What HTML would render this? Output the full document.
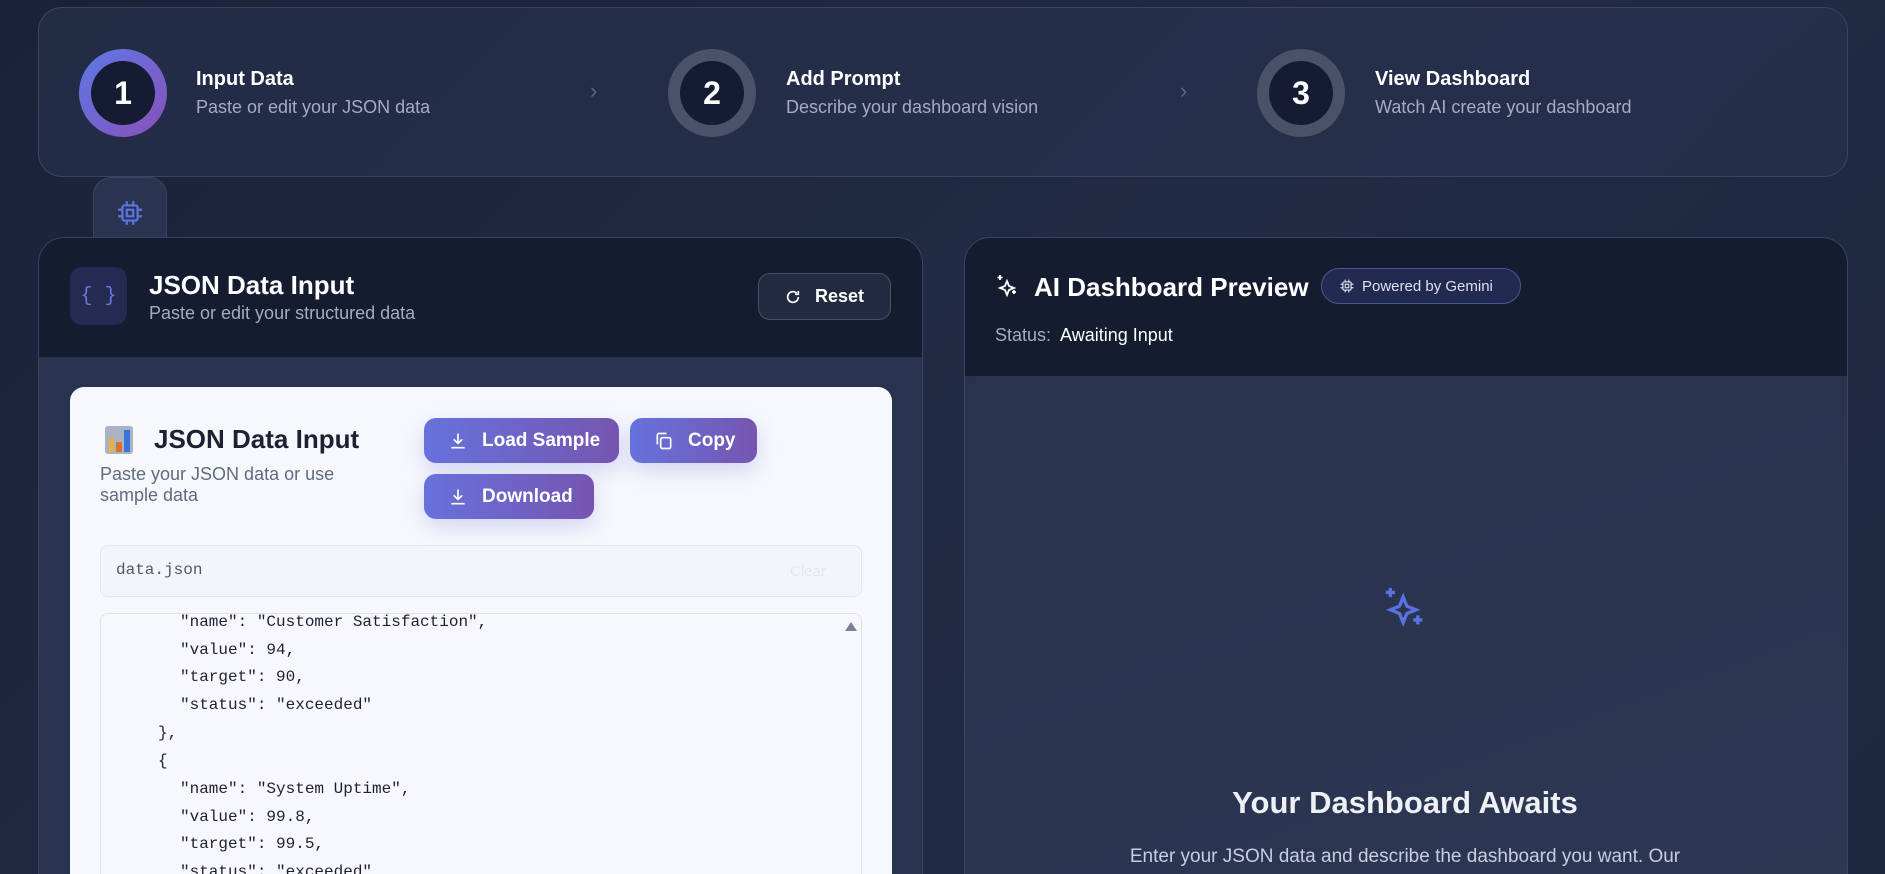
<!DOCTYPE html>
<html><head><meta charset="utf-8"><style>
*{box-sizing:border-box;margin:0;padding:0}
html,body{width:1885px;height:874px;overflow:hidden}
body{background:linear-gradient(135deg,#1a2238 0%,#222b45 50%,#1e2740 100%);font-family:"Liberation Sans",sans-serif;color:#fff}
#w{position:relative;width:1885px;height:874px;overflow:hidden}
.abs{position:absolute}
.stepper{left:38px;top:7px;width:1810px;height:170px;border:1px solid #3a4460;border-radius:24px;background:rgba(40,50,78,.6)}
.circ{width:88px;height:88px;border-radius:50%;display:flex;align-items:center;justify-content:center;font-size:32px;font-weight:bold}
.circ .in{width:64px;height:64px;border-radius:50%;background:#151b31;display:flex;align-items:center;justify-content:center}
.st{font-size:20px;font-weight:bold;color:#fff}
.ss{font-size:18px;color:#a4acc0;margin-top:6px}
.chev{color:#5d6680;font-size:22px}
.panel{border:1px solid #3a4460;border-radius:26px;overflow:hidden;background:#283350}
.hdr{background:#151c30}
.btn{background:linear-gradient(90deg,#6672dc,#7655b0);border-radius:12px;color:#fff;font-weight:bold;font-size:19px;display:flex;align-items:center;gap:14px;padding-left:24px;box-shadow:0 8px 20px rgba(102,114,220,.25)}
pre{font-family:"Liberation Mono",monospace;font-size:16px;line-height:27.7px;color:#1e2230}
</style></head><body><div id="w">
<div class="abs stepper"></div>
<div class="abs circ" style="left:79px;top:49px;background:linear-gradient(135deg,#5c78e6,#8a50b8)"><div class="in">1</div></div>
<div class="abs" style="left:196px;top:68px"><div class="st">Input Data</div><div class="ss">Paste or edit your JSON data</div></div>
<div class="abs chev" style="left:590px;top:78px">›</div>
<div class="abs circ" style="left:668px;top:49px;background:#4a5268"><div class="in">2</div></div>
<div class="abs" style="left:786px;top:68px"><div class="st">Add Prompt</div><div class="ss">Describe your dashboard vision</div></div>
<div class="abs chev" style="left:1180px;top:78px">›</div>
<div class="abs circ" style="left:1257px;top:49px;background:#4a5268"><div class="in">3</div></div>
<div class="abs" style="left:1375px;top:68px"><div class="st">View Dashboard</div><div class="ss">Watch AI create your dashboard</div></div>

<div class="abs" style="left:93px;top:177px;width:74px;height:62px;border:1px solid #3a4460;border-bottom:none;border-radius:18px 18px 0 0;background:#2a3350"></div>
<svg class="abs" style="left:117px;top:199px" width="26" height="28" viewBox="0 0 24 24" fill="none" stroke="#5d74e0" stroke-width="2"><rect x="5" y="5" width="14" height="14" rx="2"/><rect x="9" y="9" width="6" height="6"/><path d="M9 1v4M15 1v4M9 19v4M15 19v4M1 9h4M1 15h4M19 9h4M19 15h4"/></svg>

<div class="abs panel" style="left:38px;top:237px;width:885px;height:680px">
 <div class="hdr" style="height:119px"></div>
</div>
<div class="abs" style="left:70px;top:267px;width:57px;height:58px;border-radius:12px;background:#252a52;color:#6a78e0;font-size:20px;display:flex;align-items:center;justify-content:center;font-family:'Liberation Mono',monospace">{ }</div>
<div class="abs" style="left:149px;top:270px;font-size:26px;font-weight:bold">JSON Data Input</div>
<div class="abs" style="left:149px;top:303px;font-size:18px;color:#a4acc0">Paste or edit your structured data</div>
<div class="abs" style="left:758px;top:273px;width:133px;height:47px;border:1px solid #465068;border-radius:12px;background:#232b40;display:flex;align-items:center;justify-content:center;gap:14px;font-weight:bold;font-size:18px">
<svg width="16" height="16" viewBox="0 0 24 24" fill="none" stroke="#fff" stroke-width="2.5"><path d="M20 12a8 8 0 1 1-2.5-5.8M20 3v5h-5"/></svg>Reset</div>

<div class="abs" style="left:70px;top:387px;width:822px;height:520px;background:#f7f8fc;border-radius:14px"></div>
<div class="abs" style="left:105px;top:424px;width:28px;height:30px">
<div class="abs" style="left:0;top:2px;width:28px;height:28px;background:#a9b3c4;border-radius:3px"></div>
<div class="abs" style="left:4px;top:14px;width:5px;height:14px;background:#e3b445"></div>
<div class="abs" style="left:11px;top:18px;width:6px;height:10px;background:#d9702f"></div>
<div class="abs" style="left:19px;top:6px;width:6px;height:22px;background:#3c73d6"></div></div>
<div class="abs" style="left:154px;top:424px;font-size:26px;font-weight:bold;color:#1c2233">JSON Data Input</div>
<div class="abs" style="left:100px;top:464px;font-size:18px;color:#606a80;line-height:21px;width:270px">Paste your JSON data or use sample data</div>
<div class="abs btn" style="left:424px;top:418px;width:195px;height:45px"><svg width="20" height="20" viewBox="0 0 24 24" fill="none" stroke="#fff" stroke-width="2"><path d="M12 3v12M7 10l5 5 5-5M4 20h16"/></svg>Load Sample</div>
<div class="abs btn" style="left:630px;top:418px;width:127px;height:45px"><svg width="20" height="20" viewBox="0 0 24 24" fill="none" stroke="#fff" stroke-width="2"><rect x="8" y="8" width="12" height="13" rx="2"/><path d="M4 16V5a2 2 0 0 1 2-2h9"/></svg>Copy</div>
<div class="abs btn" style="left:424px;top:474px;width:170px;height:45px"><svg width="20" height="20" viewBox="0 0 24 24" fill="none" stroke="#fff" stroke-width="2"><path d="M12 3v12M7 10l5 5 5-5M4 20h16"/></svg>Download</div>
<div class="abs" style="left:100px;top:545px;width:762px;height:52px;border:1px solid #e3e7f0;border-radius:8px;background:#f3f5fa"></div>
<div class="abs" style="left:116px;top:561px;font-family:'Liberation Mono',monospace;font-size:16px;color:#505868">data.json</div>
<div class="abs" style="left:790px;top:563px;font-size:15px;color:#e2e6ee">Clear</div>
<div class="abs" style="left:100px;top:613px;width:762px;height:300px;border:1px solid #dde2ee;border-radius:8px;background:#f7f8fd;overflow:hidden">
<pre style="position:absolute;left:79px;top:-5px">"name": "Customer Satisfaction",
"value": 94,
"target": 90,
"status": "exceeded"</pre>
<pre style="position:absolute;left:57px;top:106px">},
{</pre>
<pre style="position:absolute;left:79px;top:162px">"name": "System Uptime",
"value": 99.8,
"target": 99.5,
"status": "exceeded"</pre>
<div style="position:absolute;right:4px;top:8px;width:0;height:0;border-left:6px solid transparent;border-right:6px solid transparent;border-bottom:9px solid #7a8090"></div>
</div>

<div class="abs panel" style="left:964px;top:237px;width:884px;height:680px;background:linear-gradient(160deg,#27324c,#2c3753)">
 <div class="hdr" style="height:138px"></div>
</div>
<svg class="abs" style="left:995px;top:272px" width="24" height="26" viewBox="0 0 24 24" fill="none" stroke="#fff" stroke-width="1.8"><path d="M12 8l2 5 5 2-5 2-2 5-2-5-5-2 5-2z"/><path d="M5 2v5M2.5 4.5h5M19 17v4M17 19h4"/></svg>
<div class="abs" style="left:1034px;top:272px;font-size:26px;font-weight:bold">AI Dashboard Preview</div>
<div class="abs" style="left:1321px;top:268px;width:200px;height:36px;border:1px solid #4a5690;border-radius:18px;background:#232a52;display:flex;align-items:center;gap:8px;padding-left:18px;font-size:15px;color:#dde0f0">
<svg width="14" height="16" viewBox="0 0 24 24" fill="none" stroke="#dde0f0" stroke-width="2"><rect x="5" y="5" width="14" height="14" rx="2"/><rect x="9" y="9" width="6" height="6"/><path d="M9 1v4M15 1v4M9 19v4M15 19v4M1 9h4M1 15h4M19 9h4M19 15h4"/></svg>Powered by Gemini</div>
<div class="abs" style="left:995px;top:325px;font-size:18px;color:#a4acc0">Status:&nbsp; <span style="color:#fff">Awaiting Input</span></div>
<svg class="abs" style="left:1383px;top:586px" width="44" height="44" viewBox="0 0 24 24" fill="none" stroke="#5b72e0" stroke-width="1.8"><path d="M11 6l2 5 5 2-5 2-2 5-2-5-5-2 5-2z"/><path d="M4 1v5M1.5 3.5h5M19 16v5M16.5 18.5h5"/></svg>
<div class="abs" style="left:1105px;top:785px;width:600px;text-align:center;font-size:31px;font-weight:bold;color:#eef0f6">Your Dashboard Awaits</div>
<div class="abs" style="left:1005px;top:846px;width:800px;text-align:center;font-size:19px;color:#c8cde0">Enter your JSON data and describe the dashboard you want. Our</div>
</div></body></html>
